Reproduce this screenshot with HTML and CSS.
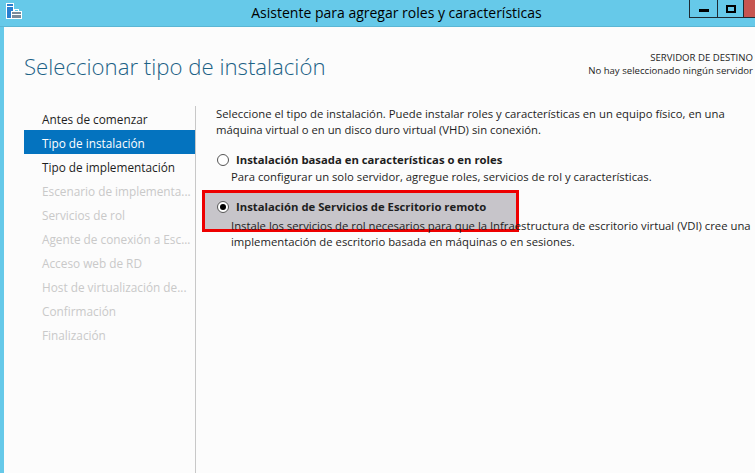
FILE: index.html
```html
<!DOCTYPE html>
<html lang="es">
<head>
<meta charset="utf-8">
<title>Asistente para agregar roles y características</title>
<link rel="stylesheet" href="styles.css">
</head>
<body>
<div class="window">
  <div class="titlebar">
    <svg class="app-icon" width="16" height="16" viewBox="0 0 16 16">
      <rect x="0.5" y="0.5" width="7" height="15" fill="#2a7fd0" stroke="#fff" stroke-width="1"/>
      <rect x="1" y="3" width="6" height="1" fill="#fff"/>
      <rect x="5.5" y="8.5" width="10" height="7" fill="#7a8a9a" stroke="#fff" stroke-width="1"/>
      <rect x="8.5" y="6.5" width="4" height="2" fill="none" stroke="#fff" stroke-width="1"/>
      <rect x="6" y="11" width="9" height="1" fill="#fff"/>
    </svg>
    <div class="title">Asistente para agregar roles y características</div>
    <div class="controls">
      <div class="btn btn-min"><span class="glyph-min"></span></div>
      <div class="btn btn-max"><span class="glyph-max"></span></div>
      <div class="btn btn-close"></div>
    </div>
  </div>
  <div class="frame">
    <div class="header">
      <h1 class="heading">Seleccionar tipo de instalación</h1>
      <div class="dest">
        <div class="dest-label">SERVIDOR DE DESTINO</div>
        <div class="dest-value">No hay seleccionado ningún servidor</div>
      </div>
    </div>
    <div class="main">
      <nav class="nav">
        <div class="nav-item">Antes de comenzar</div>
        <div class="nav-item selected">Tipo de instalación</div>
        <div class="nav-item">Tipo de implementación</div>
        <div class="nav-item disabled">Escenario de implementa...</div>
        <div class="nav-item disabled">Servicios de rol</div>
        <div class="nav-item disabled">Agente de conexión a Esc...</div>
        <div class="nav-item disabled">Acceso web de RD</div>
        <div class="nav-item disabled">Host de virtualización de...</div>
        <div class="nav-item disabled">Confirmación</div>
        <div class="nav-item disabled">Finalización</div>
      </nav>
      <section class="content">
        <p class="intro">Seleccione el tipo de instalación. Puede instalar roles y características en un equipo físico, en una máquina virtual o en un disco duro virtual (VHD) sin conexión.</p>
        <div class="option">
          <div class="option-title"><span class="radio"></span>Instalación basada en características o en roles</div>
          <div class="option-desc">Para configurar un solo servidor, agregue roles, servicios de rol y características.</div>
        </div>
        <div class="option option-selected">
          <div class="highlight"></div>
          <div class="option-title"><span class="radio checked"></span>Instalación de Servicios de Escritorio remoto</div>
          <div class="option-desc">Instale los servicios de rol necesarios para que la Infraestructura de escritorio virtual (VDI) cree una implementación de escritorio basada en máquinas o en sesiones.</div>
        </div>
      </section>
    </div>
  </div>
</div>
</body>
</html>
```

FILE: styles.css
```css
* { box-sizing: border-box; }
html, body { margin: 0; padding: 0; }
body {
  width: 755px;
  height: 473px;
  overflow: hidden;
  font-family: "Open Sans", "Noto Sans", sans-serif;
  color: #1e1e1e;
  background: #66c9e9;
}
.window {
  width: 755px;
  height: 473px;
  display: flex;
  flex-direction: column;
  background: #66c9e9;
}
.titlebar {
  height: 27px;
  flex: none;
  display: flex;
  align-items: flex-start;
  position: relative;
  border-bottom: 1px solid #5bb6d4;
}
.app-icon {
  margin: 3px 0 0 6px;
}
.title {
  position: absolute;
  left: 0;
  right: 0;
  top: 3px;
  text-align: center;
  font-size: 14px;
  color: #000;
  padding-left: 38px;
}
.controls {
  margin-left: auto;
  display: flex;
  height: 18px;
  position: relative;
}
.btn {
  height: 18px;
  flex: none;
  border-left: 1px solid #1d2b33;
  border-bottom: 1px solid #1d2b33;
  display: flex;
  align-items: center;
  justify-content: center;
}
.btn-min { width: 28px; }
.btn-max { width: 26px; }
.btn-close { width: 12px; background: #c75550; }
.glyph-min { width: 10px; height: 3px; background: #000; margin-top: 3px; }
.glyph-max { width: 10px; height: 8px; border: 2px solid #000; }
.frame {
  flex: 1;
  margin-left: 4px;
  background: #fcfcfc;
  display: flex;
  flex-direction: column;
}
.header {
  display: flex;
  justify-content: space-between;
  height: 79px;
  flex: none;
}
.heading {
  margin: 25px 0 0 20px;
  font-size: 22.2px;
  font-weight: 300;
  color: #1c6286;
  line-height: 30px;
  white-space: nowrap;
}
.dest {
  margin: 24px 2px 0 0;
  text-align: right;
  font-size: 9.6px;
  line-height: 13px;
  white-space: nowrap;
}
.main {
  flex: 1;
  display: flex;
}
.nav {
  width: 192px;
  flex: none;
  padding-left: 20px;
  border-right: 1px solid #c8c8c8;
}
.nav-item {
  height: 24px;
  padding-top: 3px;
  line-height: 20px;
  padding-left: 18px;
  font-size: 11.8px;
  color: #1e1e1e;
  white-space: nowrap;
}
.nav-item.selected {
  background: #0473bf;
  color: #fff;
}
.nav-item.disabled { color: #c9c9c9; }
.content {
  flex: 1;
  padding: 0 0 0 20px;
  font-size: 11.3px;
  line-height: 16px;
}
.intro {
  margin: 0;
  padding-top: 0;
}
.option { position: relative; }
.option-title {
  position: relative;
  display: flex;
  align-items: center;
  font-weight: 700;
  height: 19px;
  margin-top: 12px;
}
.option-desc {
  position: relative;
  padding-left: 15px;
}
.option-selected .option-title { margin-top: 12px; }
.option-selected .option-desc { padding-top: 2px; }
.radio {
  width: 12px;
  height: 12px;
  border: 1px solid #555;
  border-radius: 50%;
  background: #fff;
  margin: 0 7px 0 1px;
  position: relative;
  flex: none;
}
.radio.checked::after {
  content: "";
  position: absolute;
  left: 2px;
  top: 2px;
  width: 6px;
  height: 6px;
  border-radius: 50%;
  background: #000;
}
.highlight {
  position: absolute;
  left: -14px;
  top: -7px;
  width: 317px;
  height: 42px;
  background: #c7c5ca;
  border: 3px solid #ee0000;
}
```
